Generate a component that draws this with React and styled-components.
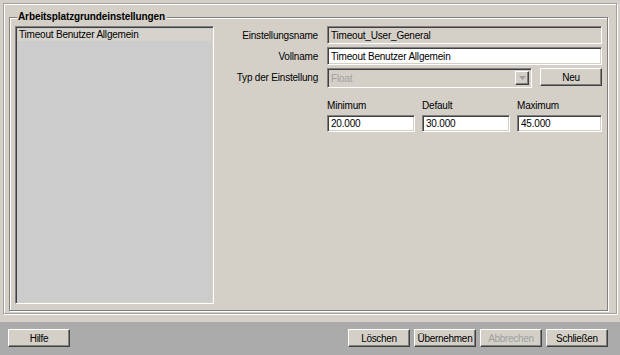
import React from "react";
import styled, { createGlobalStyle, css } from "styled-components";

const Global = createGlobalStyle`
  html, body { margin: 0; padding: 0; background: #d4d0c8; }
  body { font-family: "Liberation Sans", Arial, sans-serif; font-size: 10px; color: #000; letter-spacing: -0.2px; }
  * { box-sizing: border-box; }
`;

const Window = styled.div`
  width: 620px;
  height: 355px;
  display: flex;
  flex-direction: column;
  background: #d4d0c8;
  overflow: hidden;
`;

const OuterPanel = styled.div`
  margin: 3px 3px 0 3px;
  height: 311px;
  border: 1px solid #a0a0a0;
  box-shadow: inset 1px 1px #ffffff, 1px 1px #ffffff;
  padding: 7px 8px 2px 5px;
  display: flex;
`;

const Group = styled.fieldset`
  flex: 1;
  margin: 0;
  min-width: 0;
  border: 1px solid #808080;
  box-shadow: inset 1px 1px #ffffff, 1px 1px #ffffff;
  padding: 3px 5px 6px 5px;
  display: grid;
  grid-template-columns: 199px 1fr;
`;

const Legend = styled.legend`
  font-weight: bold;
  font-size: 10px;
  line-height: 12px;
  letter-spacing: -0.1px;
  padding: 0 2px 0 1px;
  margin-left: 2px;
  background: #d4d0c8;
`;

const sunken = css`
  border: 1px solid;
  border-color: #808080 #ffffff #ffffff #808080;
  box-shadow: inset 1px 1px #404040, inset -1px -1px #d4d0c8;
`;

const raised = css`
  border: 1px solid;
  border-color: #ffffff #404040 #404040 #ffffff;
  box-shadow: inset -1px -1px #808080;
`;

const ListBox = styled.div`
  ${sunken};
  background: #cccccc;
  padding: 2px;
  display: flex;
  flex-direction: column;
`;

const ListItem = styled.div`
  height: 12px;
  line-height: 12px;
  padding-left: 1px;
  background: ${(p) => (p.$selected ? "#d6d3cc" : "transparent")};
  white-space: nowrap;
`;

const Form = styled.div`
  display: grid;
  grid-template-columns: 1fr 275px;
  column-gap: 9px;
  row-gap: 3px;
  align-content: start;
  grid-auto-rows: 18px;
`;

const Label = styled.div`
  text-align: right;
  display: flex;
  align-items: center;
  justify-content: flex-end;
  white-space: nowrap;
`;

const Input = styled.div`
  ${sunken};
  background: ${(p) => (p.$disabled ? "#d4d0c8" : "#ffffff")};
  height: ${(p) => p.$h || 18}px;
  padding: 0 3px;
  display: flex;
  align-items: center;
  white-space: nowrap;
  overflow: hidden;
`;

const SelectRow = styled.div`
  display: grid;
  grid-template-columns: 1fr 62px;
  column-gap: 8px;
`;

const Select = styled.div`
  ${sunken};
  background: #d4d0c8;
  display: flex;
  align-items: center;
  padding: 2px 2px 2px 3px;
  color: #a0a0a0;
`;

const SelectText = styled.span`
  flex: 1;
`;

const ArrowBox = styled.div`
  ${raised};
  width: 14px;
  height: 14px;
  display: flex;
  align-items: center;
  justify-content: center;
`;

const Button = styled.button`
  ${raised};
  background: #d4d0c8;
  width: 62px;
  height: 18px;
  padding: 0;
  font-family: inherit;
  font-size: 10px;
  letter-spacing: -0.3px;
  white-space: nowrap;
  color: ${(p) => (p.$disabled ? "#a0a0a0" : "#000")};
  cursor: default;
`;

const RangeGrid = styled.div`
  grid-column: 2;
  display: grid;
  grid-template-columns: 88px 88px 1fr;
  column-gap: 7px;
  margin-top: 11px;
`;

const RangeCell = styled.div`
  display: flex;
  flex-direction: column;
  gap: 3px;
`;

const RangeLabel = styled.div`
  height: 12px;
  line-height: 12px;
`;

const Footer = styled.div`
  margin-top: 8px;
  flex: 1;
  background: #ababab;
  display: flex;
  align-items: flex-start;
  justify-content: space-between;
  padding: 7px 12px 0 8px;
`;

const ButtonGroup = styled.div`
  display: flex;
  gap: 4px;
`;

const Spacer = styled.div``;

export default function App() {
  return (
    <Window>
      <Global />
      <OuterPanel>
        <Group>
          <Legend>Arbeitsplatzgrundeinstellungen</Legend>
          <ListBox>
            <ListItem $selected>Timeout Benutzer Allgemein</ListItem>
          </ListBox>
          <Form>
            <Label>Einstellungsname</Label>
            <Input $disabled>Timeout_User_General</Input>
            <Label>Vollname</Label>
            <Input>Timeout Benutzer Allgemein</Input>
            <Label>Typ der Einstellung</Label>
            <SelectRow>
              <Select>
                <SelectText>Float</SelectText>
                <ArrowBox>
                  <svg width="7" height="4" viewBox="0 0 7 4">
                    <path d="M0 0h7L3.5 4z" fill="#a0a0a0" />
                  </svg>
                </ArrowBox>
              </Select>
              <Button>Neu</Button>
            </SelectRow>
            <Spacer />
            <RangeGrid>
              <RangeCell>
                <RangeLabel>Minimum</RangeLabel>
                <Input $h={17}>20.000</Input>
              </RangeCell>
              <RangeCell>
                <RangeLabel>Default</RangeLabel>
                <Input $h={17}>30.000</Input>
              </RangeCell>
              <RangeCell>
                <RangeLabel>Maximum</RangeLabel>
                <Input $h={17}>45.000</Input>
              </RangeCell>
            </RangeGrid>
          </Form>
        </Group>
      </OuterPanel>
      <Footer>
        <Button>Hilfe</Button>
        <ButtonGroup>
          <Button>Löschen</Button>
          <Button>Übernehmen</Button>
          <Button $disabled>Abbrechen</Button>
          <Button>Schließen</Button>
        </ButtonGroup>
      </Footer>
    </Window>
  );
}
